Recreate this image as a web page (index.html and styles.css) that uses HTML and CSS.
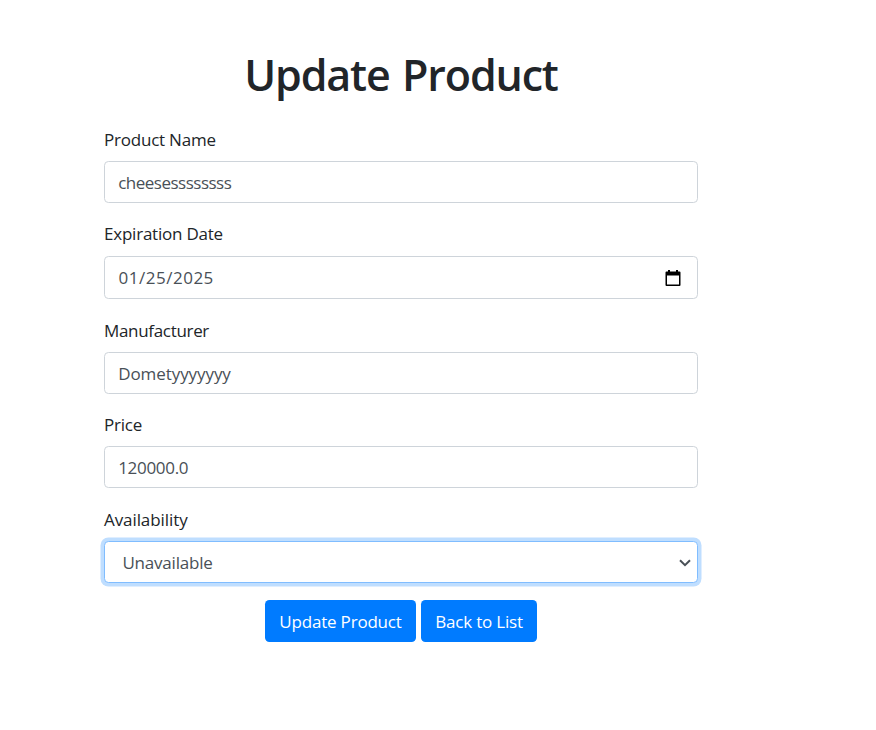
FILE: index.html
```html
<!DOCTYPE html>
<html lang="en">
<head>
<meta charset="utf-8">
<title>Update Product</title>
<link rel="stylesheet" href="styles.css">
</head>
<body>
<main class="container">
  <h1 class="title">Update Product</h1>
  <form>
    <div class="form-group">
      <label for="name" class="l-name">Product Name</label>
      <input id="name" class="form-control v-name" type="text" value="cheesessssssss" spellcheck="false">
    </div>
    <div class="form-group">
      <label for="date" class="l-date">Expiration Date</label>
      <div class="form-control date-control">
        <span id="date" class="v-date">01/25/2025</span>
        <svg class="calendar" viewBox="0 0 16 18" aria-hidden="true"><path fill-rule="evenodd" d="M3 1h2v1.500h6V1h2v1.500h1.500q1 0 1 1V16q0 1-1 1h-13q-1 0-1-1V3.500q0-1 1-1H3zM2 6.500v9h12v-9z"/></svg>
      </div>
    </div>
    <div class="form-group">
      <label for="maker" class="l-maker">Manufacturer</label>
      <input id="maker" class="form-control v-maker" type="text" value="Dometyyyyyyy" spellcheck="false">
    </div>
    <div class="form-group">
      <label for="price" class="l-price">Price</label>
      <input id="price" class="form-control v-price" type="text" value="120000.0">
    </div>
    <div class="form-group">
      <label for="avail" class="l-avail">Availability</label>
      <div class="form-control select-control">
        <span id="avail" class="v-avail">Unavailable</span>
        <svg class="chevron" viewBox="0 0 12 8" aria-hidden="true"><path d="M1 1.200l5 5 5-5"/></svg>
      </div>
    </div>
    <div class="actions">
      <button type="button" class="btn btn-update">Update Product</button>
      <button type="button" class="btn btn-back">Back to List</button>
    </div>
  </form>
</main>
</body>
</html>
```
FILE: styles.css
```css
* { box-sizing: border-box; }
body {
  margin: 0;
  background: #fff;
  color: #212529;
  font: 400 17px/26.4px "Segoe UI", "Open Sans", "Noto Sans", sans-serif;
}
.container { width: 594px; margin-left: 104px; padding-top: 49px; }
.title {
  margin: 0 0 25.2px;
  font-size: 43px;
  font-weight: 600;
  line-height: 52px;
  text-align: center;
  white-space: nowrap;
  letter-spacing: -1.15px;
  word-spacing: 2.500px;
}
.form-group { margin-bottom: 17.7px; }
label { display: block; width: max-content; padding-top: 0.4px; margin-bottom: 8.2px; letter-spacing: -0.22px; }
.form-control {
  display: block;
  width: 100%;
  height: 42px;
  padding: 0 13.200px;
  border: 1px solid #ced4da;
  border-radius: 4.4px;
  background: #fff;
  color: #495057;
  font: inherit;
}
.l-maker { letter-spacing: -0.32px; }
.l-avail { letter-spacing: -0.08px; }
.l-maker, .l-avail { padding-top: 1px; margin-bottom: 7.6px; }
.v-name { letter-spacing: -0.5px; }
.v-maker { letter-spacing: -0.08px; padding-top: 1px; }
.v-price { letter-spacing: -0.3px; }
.v-date { letter-spacing: 0.5px; }
.v-avail { letter-spacing: -0.2px; }
.date-control, .select-control {
  display: flex;
  align-items: center;
  justify-content: space-between;
}
.date-control { height: 43px; padding: 1px 16px 0 13.600px; }
.select-control {
  padding: 2px 6px 0 17.400px;
  border-color: #80bdff;
  box-shadow: 0 0 0 3.5px rgba(0, 123, 255, .25);
}
.calendar { width: 16px; height: 18px; fill: #000; }
.chevron { width: 12px; height: 8px; fill: none; stroke: #495057; stroke-width: 2; }
.actions { display: flex; justify-content: center; gap: 5px; margin-top: -0.6px; }
.btn {
  height: 42px;
  padding: 2px 0 0;
  border: 0;
  border-radius: 4.4px;
  background: #007bff;
  color: #fff;
  font: inherit;
  letter-spacing: -0.2px;
}
.btn-update { width: 151px; }
.btn-back { width: 116px; }
```
